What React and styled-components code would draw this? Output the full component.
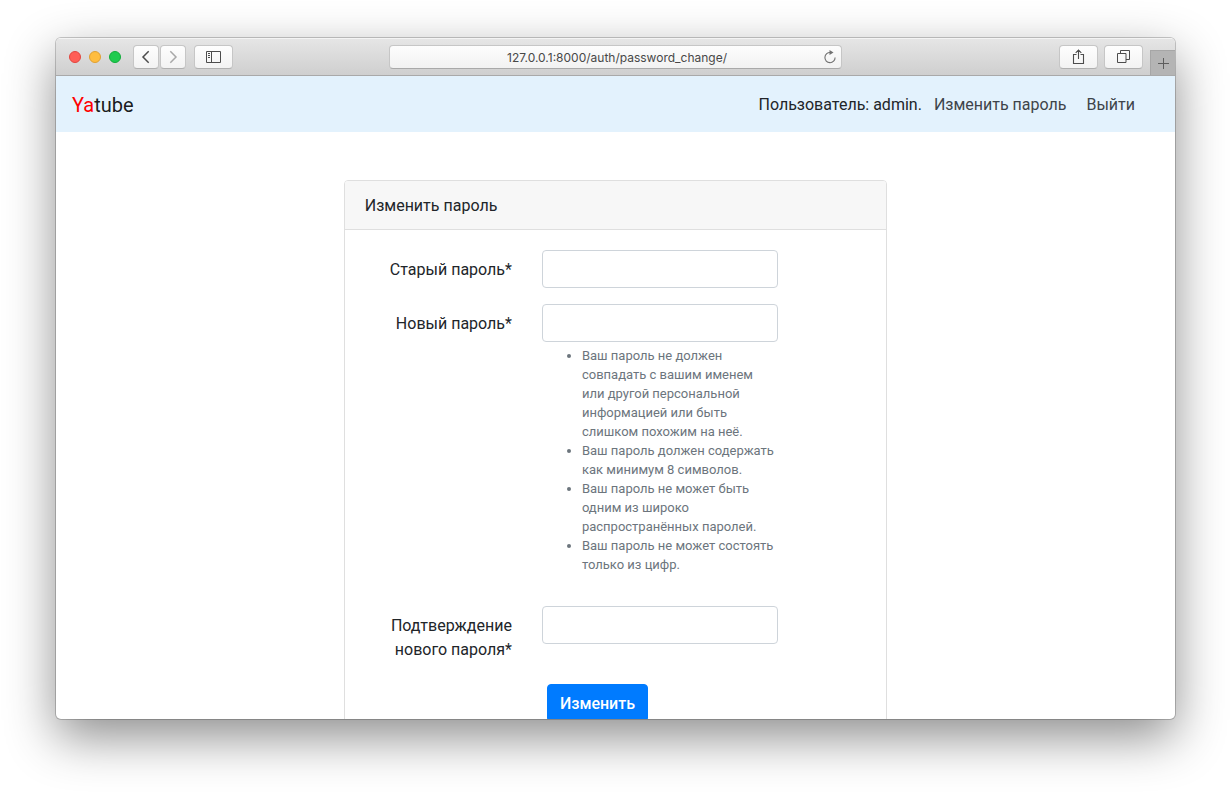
import React from 'react';
import styled, { createGlobalStyle } from 'styled-components';

const GlobalStyle = createGlobalStyle`
    *, *::before, *::after {
        box-sizing: border-box;
    }
    body {
        margin: 0;
        background: #fff;
        color: #212529;
        font-family: Roboto, "Liberation Sans", sans-serif;
        font-size: 16px;
        line-height: 24px;
    }
    button, input {
        font: inherit;
    }
`;

const Desktop = styled.div`
    display: flex;
    height: 100vh;
    padding: 38px 56px 74px;
    overflow: hidden;
`;

const Window = styled.div`
    flex: 1;
    display: flex;
    flex-direction: column;
    min-width: 0;
    overflow: hidden;
    background: #fff;
    border-radius: 5px;
    box-shadow: 0 0 0 1px rgba(0, 0, 0, 0.2), 0 18px 50px rgba(0, 0, 0, 0.45);
`;

/* ---------- Browser toolbar ---------- */

const Toolbar = styled.div`
    flex: none;
    display: grid;
    grid-template-columns: 1fr minmax(200px, 453px) 1fr;
    align-items: center;
    height: 38px;
    background: linear-gradient(#e6e6e6, #cfcfcf);
    border-bottom: 1px solid #a9a9a9;
    box-shadow: inset 0 1px 0 #f4f4f4;
`;

const ToolbarStart = styled.div`
    display: flex;
    align-items: center;
    gap: 8px;
    padding-left: 13px;
`;

const ToolbarEnd = styled.div`
    display: flex;
    justify-content: flex-end;
    align-items: center;
    align-self: stretch;
    gap: 6px;
`;

const Light = styled.button`
    width: 12px;
    height: 12px;
    padding: 0;
    border: 1px solid ${({ $edge }) => $edge};
    border-radius: 50%;
    background: ${({ $color }) => $color};
`;

const ButtonPair = styled.div`
    display: flex;
    gap: 1px;
    margin-left: 4px;
`;

const ToolButton = styled.button`
    display: flex;
    justify-content: center;
    align-items: center;
    width: ${({ $narrow }) => ($narrow ? '26px' : '39px')};
    height: 24px;
    padding: 0;
    color: ${({ $dim }) => ($dim ? '#a8a8a8' : '#4c4c4c')};
    background: linear-gradient(#fefefe, #f3f3f3);
    border: 1px solid #c6c6c6;
    border-bottom-color: #b0b0b0;
    border-radius: 4px;
`;

const AddressBar = styled.div`
    display: flex;
    align-items: center;
    height: 24px;
    padding: 0 4px 0 21px;
    background: linear-gradient(#fdfdfd, #f2f2f2);
    border: 1px solid #c6c6c6;
    border-bottom-color: #a9a9a9;
    border-radius: 4px;
`;

const AddressInput = styled.input`
    flex: 1;
    min-width: 0;
    padding: 2px 0 0;
    border: 0;
    outline: 0;
    background: none;
    color: #484848;
    font-family: Inter, "Liberation Sans", sans-serif;
    font-size: 12px;
    line-height: 16px;
    text-align: center;
`;

const ReloadButton = styled.button`
    display: flex;
    padding: 0;
    border: 0;
    background: none;
    color: #707070;
`;

const NewTab = styled.button`
    display: flex;
    justify-content: center;
    align-items: center;
    align-self: flex-end;
    width: 25px;
    height: 25px;
    margin-left: 1px;
    padding: 0;
    color: #5c5c5c;
    background: #b4b4b4;
    border: 0;
    border-top: 1px solid #a6a6a6;
    border-left: 1px solid #a6a6a6;
`;

/* ---------- Site ---------- */

const Site = styled.div`
    flex: 1;
    min-height: 0;
    overflow: hidden;
`;

const Navbar = styled.nav`
    display: flex;
    justify-content: space-between;
    align-items: center;
    height: 56px;
    padding: 9px 40px 7px 16px;
    background: #e3f2fd;
`;

const Brand = styled.a`
    color: rgba(0, 0, 0, 0.9);
    font-size: 20px;
    text-decoration: none;

    span {
        color: #f00;
    }
`;

const NavItems = styled.div`
    display: flex;
    gap: 20px;
`;

const NavUser = styled.span`
    margin-right: -8px;
`;

const NavLink = styled.a`
    color: #3e444a;
    text-decoration: none;
`;

const Main = styled.main`
    padding: 48px 0;
`;

const Card = styled.section`
    width: calc(50% - 16px);
    margin: 0 auto;
    border: 1px solid #dfdfdf;
    border-radius: 4px;
`;

const CardHeader = styled.header`
    padding: 13px 20px 11px;
    background: #f7f7f7;
    border-bottom: 1px solid #dfdfdf;
    border-radius: 3px 3px 0 0;
`;

const Form = styled.form`
    display: flex;
    flex-direction: column;
    gap: 16px;
    padding: 20px 5px;
`;

const FormRow = styled.div`
    display: grid;
    grid-template-columns: 4fr 6fr 2fr;
`;

const Label = styled.label`
    padding: 8px 15px 6px;
    text-align: right;
`;

const Field = styled.div`
    padding: 0 15px;
`;

const PasswordInput = styled.input`
    display: block;
    width: 100%;
    height: 38px;
    padding: 6px 12px;
    color: #495057;
    background: #fff;
    border: 1px solid #ced4da;
    border-radius: 4px;
`;

const Hints = styled.ul`
    margin: 4px 0 16px;
    padding-left: 40px;
    color: #6c757d;
    font-size: 13px;
    line-height: 19px;
`;

const Actions = styled.div`
    grid-column: 2 / -1;
    padding: 0 20px;
`;

const SubmitButton = styled.button`
    padding: 7px 12px 5px;
    color: #fff;
    background: #007bff;
    border: 1px solid #007bff;
    border-radius: 4px;
    font-weight: 500;
`;

const ChevronIcon = ({ right }) => (
    <svg width="14" height="14" viewBox="0 0 14 14" fill="none" stroke="currentColor" strokeWidth="1.5">
        <path d={right ? 'M4.3 1.3 10 7l-5.7 5.7' : 'M9.7 1.3 4 7l5.7 5.7'} />
    </svg>
);

const SidebarIcon = () => (
    <svg width="15" height="12" viewBox="0 0 15 12" fill="none" stroke="currentColor">
        <path d="M.5.5h14v11H.5zM5.5.5v11" />
        <path d="M2 2.5h2M2 4.5h2M2 6.5h2" />
    </svg>
);

const ReloadIcon = () => (
    <svg width="14" height="14" viewBox="0 0 14 14" fill="none" stroke="currentColor" strokeWidth="1.1">
        <path d="M7.5 2.5A5.1 5.1 0 1 0 12.1 7.5" />
        <path d="M6.5 0v5l4-2.5z" fill="currentColor" stroke="none" />
    </svg>
);

const ShareIcon = () => (
    <svg width="13" height="16" viewBox="0 0 13 16" fill="none" stroke="currentColor" strokeWidth="1.1">
        <path d="M4.5 5.5h-3v9h10v-9h-3M6.5 10V1M3.7 3.8 6.5 1l2.8 2.8" />
    </svg>
);

const TabsIcon = () => (
    <svg width="13" height="13" viewBox="0 0 13 13" fill="none" stroke="currentColor">
        <path d="M.5 3.5H9v9H.5zM3.5 3.5v-3h9v9H9" />
    </svg>
);

const PlusIcon = () => (
    <svg width="11" height="11" viewBox="0 0 11 11" fill="none" stroke="currentColor">
        <path d="M5.5 0v11M0 5.5h11" />
    </svg>
);

const hints = [
    'Ваш пароль не должен совпадать с вашим именем или другой персональной информацией или быть слишком похожим на неё.',
    'Ваш пароль должен содержать как минимум 8 символов.',
    'Ваш пароль не может быть одним из широко распространённых паролей.',
    'Ваш пароль не может состоять только из цифр.',
];

const BrowserToolbar = () => (
    <Toolbar>
        <ToolbarStart>
            <Light $color="#ff5f57" $edge="#e2463f" aria-label="Close" />
            <Light $color="#ffbd3f" $edge="#e0a033" aria-label="Minimize" />
            <Light $color="#1fcb4f" $edge="#12ac3a" aria-label="Zoom" />
            <ButtonPair>
                <ToolButton $narrow aria-label="Back"><ChevronIcon /></ToolButton>
                <ToolButton $narrow $dim aria-label="Forward"><ChevronIcon right /></ToolButton>
            </ButtonPair>
            <ToolButton aria-label="Sidebar"><SidebarIcon /></ToolButton>
        </ToolbarStart>
        <AddressBar>
            <AddressInput aria-label="Address" defaultValue="127.0.0.1:8000/auth/password_change/" />
            <ReloadButton aria-label="Reload"><ReloadIcon /></ReloadButton>
        </AddressBar>
        <ToolbarEnd>
            <ToolButton aria-label="Share"><ShareIcon /></ToolButton>
            <ToolButton aria-label="Tabs"><TabsIcon /></ToolButton>
            <NewTab aria-label="New tab"><PlusIcon /></NewTab>
        </ToolbarEnd>
    </Toolbar>
);

const PasswordForm = () => (
    <Form>
        <FormRow>
            <Label htmlFor="old_password">Старый пароль*</Label>
            <Field>
                <PasswordInput type="password" id="old_password" />
            </Field>
        </FormRow>
        <FormRow>
            <Label htmlFor="new_password1">Новый пароль*</Label>
            <Field>
                <PasswordInput type="password" id="new_password1" />
                <Hints>
                    {hints.map((hint) => (
                        <li key={hint}>{hint}</li>
                    ))}
                </Hints>
            </Field>
        </FormRow>
        <FormRow>
            <Label htmlFor="new_password2">Подтверждение нового пароля*</Label>
            <Field>
                <PasswordInput type="password" id="new_password2" />
            </Field>
        </FormRow>
        <FormRow>
            <Actions>
                <SubmitButton type="submit">Изменить</SubmitButton>
            </Actions>
        </FormRow>
    </Form>
);

const App = () => {
    return (
        <>
            <GlobalStyle />
            <Desktop>
                <Window>
                    <BrowserToolbar />
                    <Site>
                        <Navbar>
                            <Brand href="#"><span>Ya</span>tube</Brand>
                            <NavItems>
                                <NavUser>Пользователь: admin.</NavUser>
                                <NavLink href="#">Изменить пароль</NavLink>
                                <NavLink href="#">Выйти</NavLink>
                            </NavItems>
                        </Navbar>
                        <Main>
                            <Card>
                                <CardHeader>Изменить пароль</CardHeader>
                                <PasswordForm />
                            </Card>
                        </Main>
                    </Site>
                </Window>
            </Desktop>
        </>
    );
};

export default App;
